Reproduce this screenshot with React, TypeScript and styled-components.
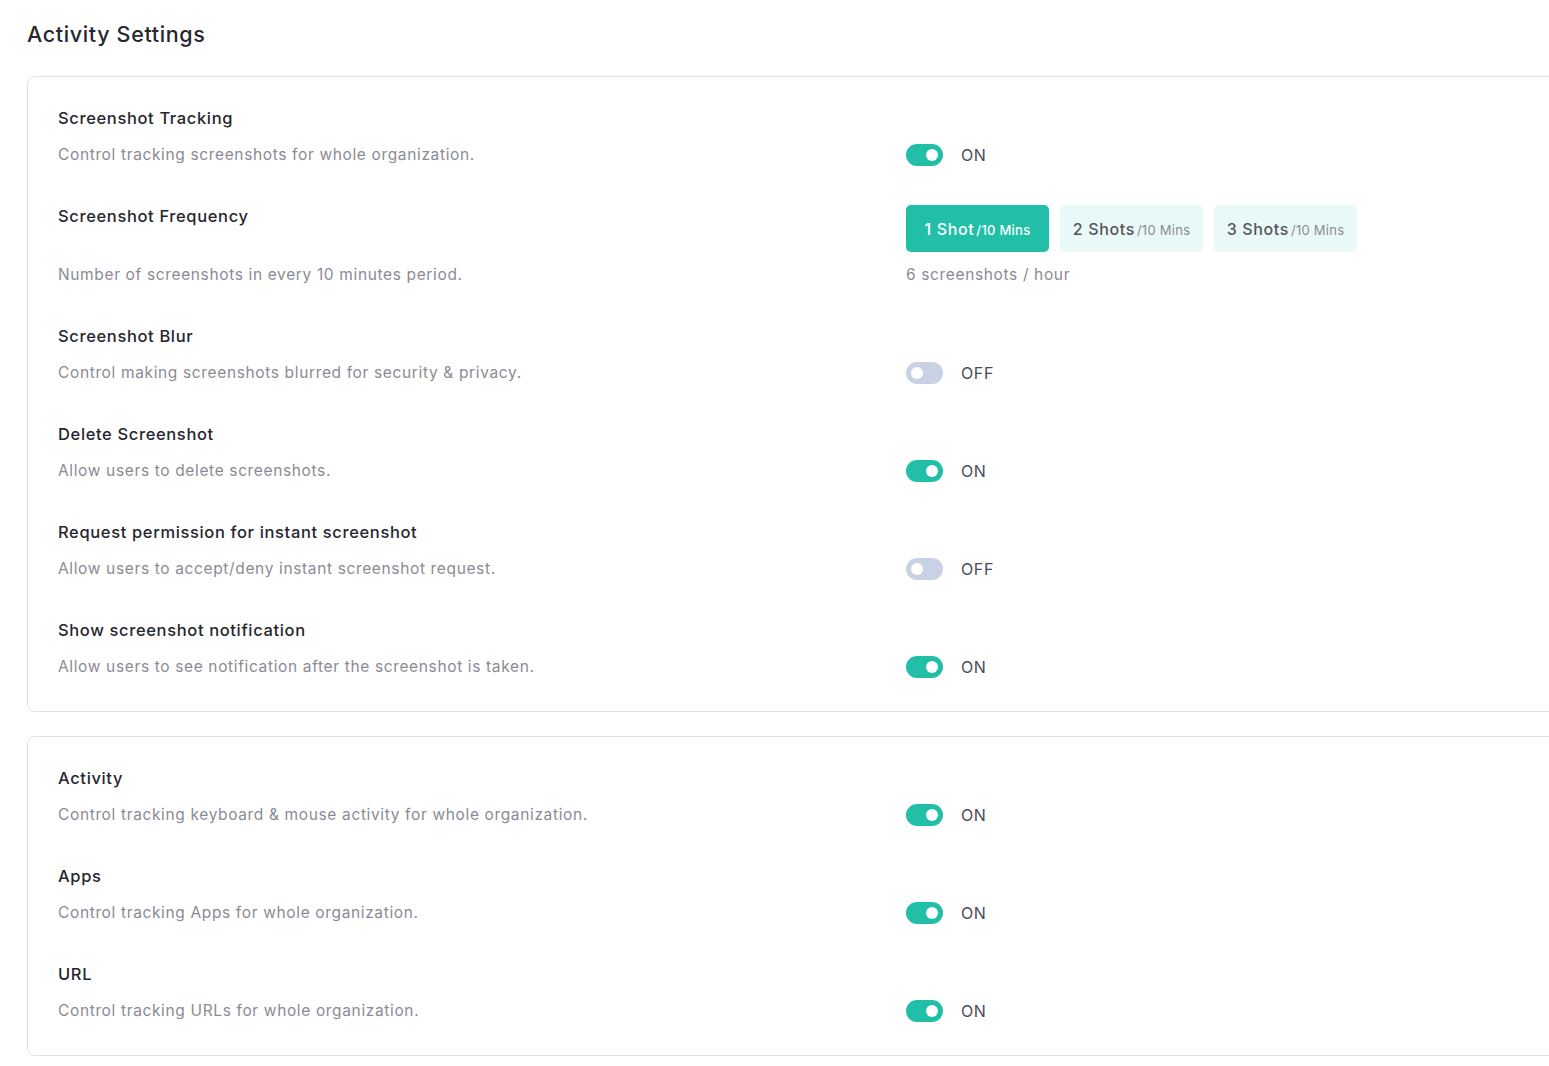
import React from 'react';
import styled, { createGlobalStyle } from 'styled-components';

const GlobalStyle = createGlobalStyle`
  html, body {
    margin: 0;
    padding: 0;
    background: #ffffff;
    overflow-x: hidden;
  }
  body {
    font-family: Inter, "Open Sans", sans-serif;
    letter-spacing: 0.04em;
  }
`;

const Page = styled.div`
  padding: 20px 0 0 27px;
`;

const PageTitle = styled.h1`
  margin: 0 0 28px;
  font-size: 21.5px;
  line-height: 28px;
  font-weight: 500;
  color: #27272f;
`;

const Card = styled.section`
  width: 1580px;
  box-sizing: border-box;
  border: 1px solid #dde1ea;
  border-radius: 8px;
  padding: 30px 30px 33px;
  margin-bottom: 24px;
  display: flex;
  flex-direction: column;
  gap: 39px;
`;

const Setting = styled.div<{ $gap: number }>`
  display: grid;
  grid-template-columns: 848px 1fr;
  row-gap: ${(p) => p.$gap}px;
  align-items: start;
`;

const SettingTitle = styled.div`
  font-size: 16.5px;
  line-height: 22px;
  font-weight: 500;
  color: #26262e;
`;

const SettingDesc = styled.div`
  font-size: 15.5px;
  line-height: 22px;
  color: #8b8b94;
`;

const ControlCell = styled.div`
  display: flex;
  align-items: center;
  height: 22px;
`;

const Track = styled.span<{ $on: boolean }>`
  position: relative;
  width: 37px;
  height: 22px;
  border-radius: 11px;
  background: ${(p) => (p.$on ? '#21bfa8' : '#c9d1e4')};
  flex-shrink: 0;
`;

const Knob = styled.span<{ $on: boolean }>`
  position: absolute;
  top: 5px;
  left: ${(p) => (p.$on ? '20px' : '5px')};
  width: 12px;
  height: 12px;
  border-radius: 50%;
  background: #ffffff;
`;

const StateLabel = styled.span`
  margin-left: 18px;
  font-size: 16px;
  color: #4b4b55;
`;

const ShotGroup = styled.div`
  display: flex;
  gap: 11px;
`;

const ShotButton = styled.button<{ $active: boolean }>`
  width: 143px;
  height: 47px;
  border: none;
  border-radius: 5px;
  background: ${(p) => (p.$active ? '#21bfa8' : '#e9f9f7')};
  color: ${(p) => (p.$active ? '#ffffff' : '#55555e')};
  font-family: inherit;
  letter-spacing: inherit;
  font-size: 16px;
  font-weight: 500;
  display: flex;
  align-items: baseline;
  justify-content: center;
  padding: 14px 0 0;
  cursor: pointer;
`;

const ShotUnit = styled.span<{ $active: boolean }>`
  font-size: 13px;
  letter-spacing: 0.02em;
  font-weight: ${(p) => (p.$active ? 500 : 400)};
  color: ${(p) => (p.$active ? '#ffffff' : '#8b8b94')};
  margin-left: 2px;
`;

const FreqNote = styled.div`
  font-size: 15.5px;
  line-height: 22px;
  color: #8b8b94;
`;

const Toggle: React.FC<{ on: boolean }> = ({ on }) => (
  <ControlCell>
    <Track $on={on}>
      <Knob $on={on} />
    </Track>
    <StateLabel>{on ? 'ON' : 'OFF'}</StateLabel>
  </ControlCell>
);

type Item = { title: string; desc: string; on: boolean };

const screenshotItems: Item[] = [
  { title: 'Screenshot Blur', desc: 'Control making screenshots blurred for security & privacy.', on: false },
  { title: 'Delete Screenshot', desc: 'Allow users to delete screenshots.', on: true },
  { title: 'Request permission for instant screenshot', desc: 'Allow users to accept/deny instant screenshot request.', on: false },
  { title: 'Show screenshot notification', desc: 'Allow users to see notification after the screenshot is taken.', on: true },
];

const activityItems: Item[] = [
  { title: 'Activity', desc: 'Control tracking keyboard & mouse activity for whole organization.', on: true },
  { title: 'Apps', desc: 'Control tracking Apps for whole organization.', on: true },
  { title: 'URL', desc: 'Control tracking URLs for whole organization.', on: true },
];

const ToggleSetting: React.FC<Item> = ({ title, desc, on }) => (
  <Setting $gap={15}>
    <SettingTitle>{title}</SettingTitle>
    <div />
    <SettingDesc>{desc}</SettingDesc>
    <Toggle on={on} />
  </Setting>
);

const shots = [
  { label: '1 Shot', active: true },
  { label: '2 Shots', active: false },
  { label: '3 Shots', active: false },
];

export default function App() {
  return (
    <Page>
      <GlobalStyle />
      <PageTitle>Activity Settings</PageTitle>
      <Card>
        <ToggleSetting
          title="Screenshot Tracking"
          desc="Control tracking screenshots for whole organization."
          on
        />
        <Setting $gap={12}>
          <SettingTitle>Screenshot Frequency</SettingTitle>
          <ShotGroup>
            {shots.map((s) => (
              <ShotButton key={s.label} $active={s.active}>
                {s.label}
                <ShotUnit $active={s.active}>/10 Mins</ShotUnit>
              </ShotButton>
            ))}
          </ShotGroup>
          <SettingDesc>Number of screenshots in every 10 minutes period.</SettingDesc>
          <FreqNote>6 screenshots / hour</FreqNote>
        </Setting>
        {screenshotItems.map((it) => (
          <ToggleSetting key={it.title} {...it} />
        ))}
      </Card>
      <Card>
        {activityItems.map((it) => (
          <ToggleSetting key={it.title} {...it} />
        ))}
      </Card>
    </Page>
  );
}
